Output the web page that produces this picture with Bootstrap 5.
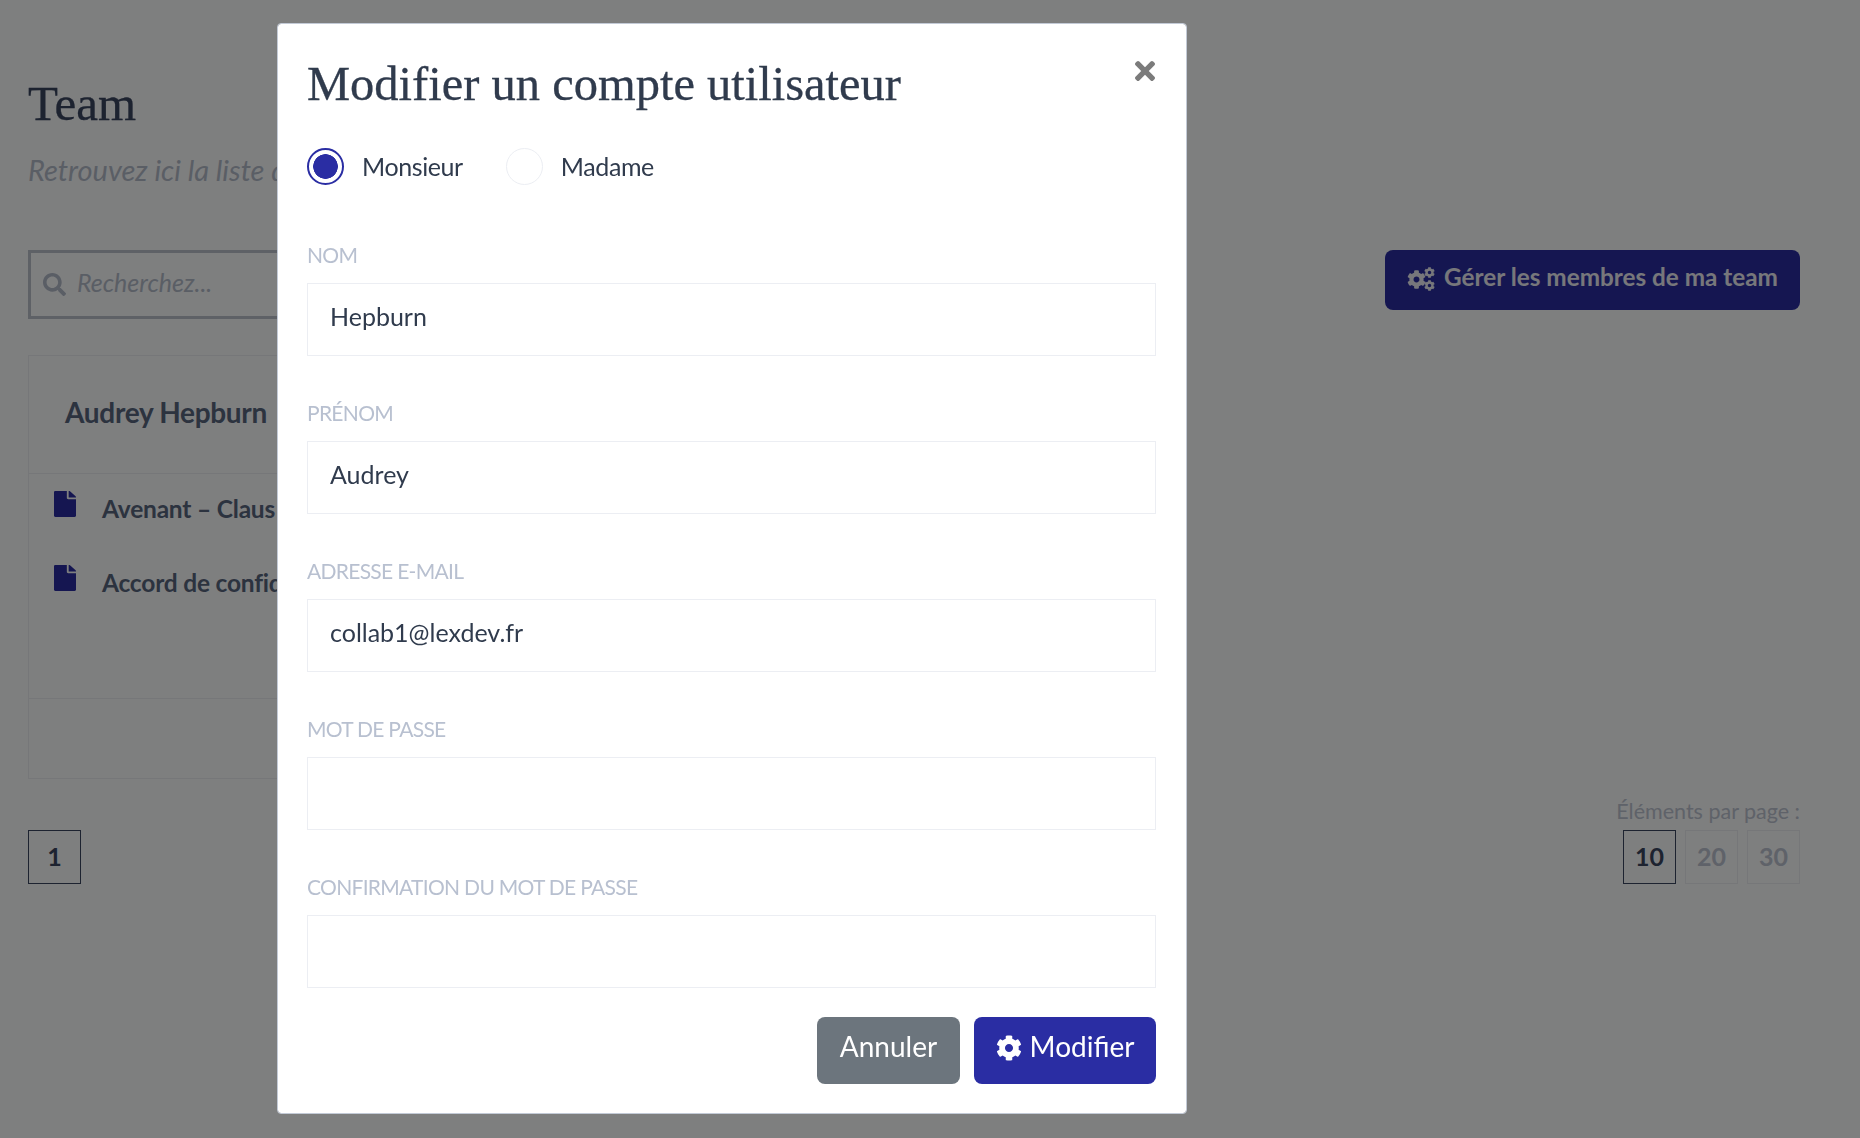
<!DOCTYPE html>
<html lang="fr">
<head>
  <meta charset="UTF-8">
  <meta name="viewport" content="width=device-width, initial-scale=1.0">
  <title>Team</title>
  <link href="https://cdn.jsdelivr.net/npm/bootstrap@5.3.0/dist/css/bootstrap.min.css" rel="stylesheet">
  <style>
    body {
      background-color: #fdfeff;
      font-family: "Lato", "Liberation Sans", sans-serif;
      color: #303b4d;
      height: 1138px;
      overflow: hidden;
    }
    .page-wrap {
      padding: 0 60px 0 28px;
    }
    .page-title {
      font-family: "Liberation Serif", serif;
      font-size: 49px;
      line-height: 54px;
      margin: 77px 0 0;
      color: #3a4660;
      -webkit-text-stroke: .3px;
    }
    .page-sub {
      white-space: nowrap;
      font-style: italic;
      font-size: 29px;
      line-height: 36px;
      margin: 21px 0 0;
      color: #b4bccb;
    }
    .tools-row {
      margin-top: 62px;
    }
    .search-box {
      width: 620px;
      height: 69px;
      border: 3px solid #bcc2cd;
      padding: 0 0 4px 12px;
      gap: 11px;
      color: #b4bccb;
      font-style: italic;
      font-size: 25px;
    }
    .search-box svg {
      width: 23px;
      height: 23px;
      fill: #b4bccb;
      margin-top: 4px;
    }
    .btn-team {
      width: 415px;
      height: 60px;
      background-color: #2a2da3;
      color: #eeeff6;
      font-size: 24.3px;
      font-weight: 700;
      border-radius: 8px;
      padding: 0 0 6px;
    }
    .btn-team svg {
      width: 29px;
      height: 26px;
      fill: #eeeff6;
      margin-top: 4px;
    }
    .team-card {
      width: 900px;
      margin-top: 36px;
      border: 1px solid #eceef3;
      border-radius: 0;
      background: transparent;
    }
    .team-card .card-header {
      height: 118px;
      background: transparent;
      border-bottom: 1px solid #eceef3;
      border-radius: 0;
      padding: 0 36px;
      font-size: 28px;
      letter-spacing: -.3px;
      font-weight: 700;
      line-height: 112px;
      color: #58667f;
    }
    .team-card .card-body {
      height: 224px;
      flex: none;
      padding: 0 25px;
    }
    .team-card .card-footer {
      height: 80px;
      background: transparent;
      border-top: 1px solid #eceef3;
      border-radius: 0;
    }
    .doc-row {
      height: 74px;
      padding-bottom: 4px;
      font-size: 24.5px;
      letter-spacing: -.2px;
      font-weight: 700;
      gap: 26px;
      color: #58667f;
    }
    .doc-row svg {
      width: 22px;
      height: 26px;
      fill: #2a2da3;
      flex: none;
      margin-bottom: 10px;
    }
    .pager-row {
      margin-top: 18px;
    }
    .per-label {
      font-size: 21.5px;
      line-height: 28px;
      margin-bottom: 5px;
      color: #bec5d2;
      text-align: right;
    }
    .page-box {
      width: 53px;
      height: 54px;
      border: 1px solid #eceef3;
      color: #bec5d2;
      font-size: 25px;
      font-weight: 700;
    }
    .page-box.is-on {
      border-color: #3a4660;
      color: #3a4660;
    }
    .box-gap {
      gap: 9px;
    }
    .modal-backdrop.show {
      opacity: .5;
    }
    .edit-dialog {
      width: 910px;
      max-width: 910px;
      margin: 23px 0 0 277px;
    }
    .edit-dialog .modal-content {
      height: 1091px;
      border: 1px solid #c3cad6;
      border-radius: 4px;
      padding: 0 30px 0 29px;
    }
    .edit-title {
      font-family: "Liberation Serif", serif;
      font-size: 48.5px;
      line-height: 54px;
      font-weight: 400;
      margin: 33px 0 0;
      color: #303b4d;
      -webkit-text-stroke: .3px;
    }
    .close-x {
      top: 37px;
      right: 31px;
      width: 20px;
      height: 20px;
      border: 0;
      background: none;
      padding: 0;
    }
    .close-x svg {
      display: block;
      width: 20px;
      height: 20px;
      fill: #7b7b7b;
    }
    .radio-row {
      margin: 37px 0 55px;
      height: 37px;
      gap: 43px;
    }
    .radio-row .form-check {
      margin: 0;
      padding: 0;
      gap: 18px;
      min-height: 0;
      font-size: 25px;
      letter-spacing: -.4px;
    }
    .radio-row .form-check-input {
      float: none;
      margin: 0;
      width: 37px;
      height: 37px;
      border: 1px solid #eceef3;
    }
    .radio-row .form-check-input:checked {
      border: 2px solid #2a2da3;
      background-color: #fff;
      background-image: radial-gradient(circle, #2a2da3 0, #2a2da3 12px, #fff 12.6px);
    }
    .radio-row .form-check-input:focus {
      box-shadow: none;
    }
    .field-group {
      margin-bottom: 42px;
    }
    .field-group .form-label {
      display: block;
      font-size: 21px;
      letter-spacing: -.7px;
      line-height: 30px;
      margin-bottom: 13px;
      color: #b8c0d0;
      text-transform: uppercase;
    }
    .field-group .form-control {
      height: 73px;
      border: 1px solid #eceef3;
      border-radius: 0;
      padding: 0 22px 8px;
      font-size: 25px;
      color: #303b4d;
    }
    .field-group.last-field {
      margin-bottom: 29px;
    }
    .form-actions {
      gap: 14px;
    }
    .btn-cancel, .btn-save {
      height: 67px;
      border: 0;
      border-radius: 8px;
      font-size: 28px;
      color: #fff;
      padding: 0 0 9px;
    }
    .btn-cancel {
      width: 143px;
      background-color: #6c757d;
    }
    .btn-save {
      width: 182px;
      background-color: #2a2da3;
    }
    .btn-save svg {
      width: 26px;
      height: 26px;
      fill: #fff;
      margin-top: 4px;
    }
  </style>
</head>
<body>
  <svg class="d-none">
    <symbol id="cog" viewBox="0 0 512 512"><path d="M487.4 315.7l-42.6-24.6c4.3-23.2 4.3-47 0-70.2l42.6-24.6c4.9-2.8 7.1-8.6 5.5-14-11.1-35.6-30-67.8-54.7-94.6-3.8-4.1-10-5.1-14.8-2.3L380.8 110c-17.9-15.4-38.5-27.3-60.8-35.1V25.8c0-5.6-3.9-10.5-9.4-11.7-36.7-8.2-74.3-7.8-109.2 0-5.5 1.2-9.4 6.1-9.4 11.7V75c-22.2 7.9-42.8 19.8-60.8 35.1L88.7 85.5c-4.9-2.8-11-1.9-14.8 2.3-24.7 26.7-43.6 58.9-54.7 94.6-1.7 5.4.6 11.2 5.5 14L67.3 221c-4.3 23.2-4.3 47 0 70.2l-42.6 24.6c-4.9 2.8-7.1 8.6-5.5 14 11.1 35.6 30 67.8 54.7 94.6 3.8 4.1 10 5.1 14.8 2.3l42.6-24.6c17.9 15.4 38.5 27.3 60.8 35.1v49.2c0 5.6 3.9 10.5 9.4 11.7 36.7 8.2 74.3 7.8 109.2 0 5.5-1.2 9.4-6.1 9.4-11.7v-49.2c22.2-7.9 42.8-19.8 60.8-35.1l42.6 24.6c4.9 2.8 11 1.9 14.8-2.3 24.7-26.7 43.6-58.9 54.7-94.6 1.5-5.5-.7-11.3-5.6-14.1zM256 336c-44.1 0-80-35.9-80-80s35.9-80 80-80 80 35.9 80 80-35.9 80-80 80z"/></symbol>
    <symbol id="doc" viewBox="0 0 384 512" preserveAspectRatio="none"><path d="M224 136V0H24C10.7 0 0 10.7 0 24v464c0 13.3 10.7 24 24 24h336c13.3 0 24-10.7 24-24V160H248c-13.2 0-24-10.8-24-24zm160-14.1v6.1H256V0h6.1c6.4 0 12.5 2.5 17 7l97.9 98c4.5 4.5 7 10.6 7 16.9z"/></symbol>
  </svg>

  <div class="page-wrap">
    <h1 class="page-title">Team</h1>
    <p class="page-sub">Retrouvez ici la liste d</p>

    <div class="tools-row d-flex justify-content-between align-items-start">
      <div class="search-box d-flex align-items-center">
        <svg viewBox="0 0 512 512"><path d="M505 442.7L405.3 343c-4.5-4.5-10.6-7-17-7H372c27.6-35.3 44-79.7 44-128C416 93.1 322.9 0 208 0S0 93.1 0 208s93.1 208 208 208c48.3 0 92.7-16.4 128-44v16.3c0 6.4 2.5 12.5 7 17l99.7 99.7c9.4 9.4 24.6 9.4 33.9 0l28.3-28.3c9.4-9.4 9.4-24.6.1-34zM208 336c-70.7 0-128-57.2-128-128 0-70.7 57.2-128 128-128 70.7 0 128 57.2 128 128 0 70.7-57.2 128-128 128z"/></svg>
        <span>Recherchez...</span>
      </div>
      <button type="button" class="btn btn-team d-flex align-items-center justify-content-center gap-2">
        <svg viewBox="0 0 29 26">
          <use href="#cog" x="0" y="4" width="19" height="19"/>
          <use href="#cog" x="17" y="1" width="11" height="11"/>
          <use href="#cog" x="17" y="14" width="11" height="11"/>
        </svg>
        Gérer les membres de ma team
      </button>
    </div>

    <div class="card team-card">
      <div class="card-header">Audrey Hepburn</div>
      <div class="card-body">
        <div class="doc-row d-flex align-items-center">
          <svg><use href="#doc" width="22" height="26"/></svg>
          <span>Avenant – Claus</span>
        </div>
        <div class="doc-row d-flex align-items-center">
          <svg><use href="#doc" width="22" height="26"/></svg>
          <span>Accord de confid</span>
        </div>
      </div>
      <div class="card-footer"></div>
    </div>

    <div class="pager-row d-flex justify-content-between align-items-end">
      <div class="page-box is-on d-flex align-items-center justify-content-center">1</div>
      <div>
        <div class="per-label">Éléments par page :</div>
        <div class="box-gap d-flex justify-content-end">
          <div class="page-box is-on d-flex align-items-center justify-content-center">10</div>
          <div class="page-box d-flex align-items-center justify-content-center">20</div>
          <div class="page-box d-flex align-items-center justify-content-center">30</div>
        </div>
      </div>
    </div>
  </div>

  <div class="modal-backdrop show"></div>
  <div class="modal d-block" tabindex="-1">
    <div class="modal-dialog edit-dialog">
      <div class="modal-content">
        <button type="button" class="close-x position-absolute" aria-label="Fermer">
          <svg viewBox="0 80 352 352"><path d="M242.72 256l100.07-100.07c12.28-12.28 12.28-32.19 0-44.48l-22.24-22.24c-12.28-12.28-32.19-12.28-44.48 0L176 189.28 75.93 89.21c-12.28-12.28-32.19-12.28-44.48 0L9.21 111.45c-12.28 12.28-12.28 32.19 0 44.48L109.28 256 9.21 356.07c-12.28 12.28-12.28 32.19 0 44.48l22.24 22.24c12.28 12.28 32.2 12.28 44.48 0L176 322.72l100.07 100.07c12.28 12.28 32.2 12.28 44.48 0l22.24-22.24c12.28-12.28 12.28-32.19 0-44.48L242.72 256z"/></svg>
        </button>
        <h2 class="edit-title">Modifier un compte utilisateur</h2>

        <form>
          <div class="radio-row d-flex">
            <div class="form-check d-flex align-items-center">
              <input class="form-check-input" type="radio" name="civilite" id="civM" checked>
              <label class="form-check-label" for="civM">Monsieur</label>
            </div>
            <div class="form-check d-flex align-items-center">
              <input class="form-check-input" type="radio" name="civilite" id="civF">
              <label class="form-check-label" for="civF">Madame</label>
            </div>
          </div>

          <div class="field-group">
            <label class="form-label" for="nom">Nom</label>
            <input type="text" class="form-control" id="nom" value="Hepburn">
          </div>
          <div class="field-group">
            <label class="form-label" for="prenom">Prénom</label>
            <input type="text" class="form-control" id="prenom" value="Audrey">
          </div>
          <div class="field-group">
            <label class="form-label" for="email">Adresse e-mail</label>
            <input type="text" class="form-control" id="email" value="collab1@lexdev.fr">
          </div>
          <div class="field-group">
            <label class="form-label" for="pass">Mot de passe</label>
            <input type="password" class="form-control" id="pass">
          </div>
          <div class="field-group last-field">
            <label class="form-label" for="pass2">Confirmation du mot de passe</label>
            <input type="password" class="form-control" id="pass2">
          </div>

          <div class="form-actions d-flex justify-content-end">
            <button type="button" class="btn btn-cancel">Annuler</button>
            <button type="button" class="btn btn-save d-flex align-items-center justify-content-center gap-2">
              <svg><use href="#cog"/></svg>
              Modifier
            </button>
          </div>
        </form>
      </div>
    </div>
  </div>

  <script src="https://cdn.jsdelivr.net/npm/bootstrap@5.3.0/dist/js/bootstrap.bundle.min.js"></script>
</body>
</html>
